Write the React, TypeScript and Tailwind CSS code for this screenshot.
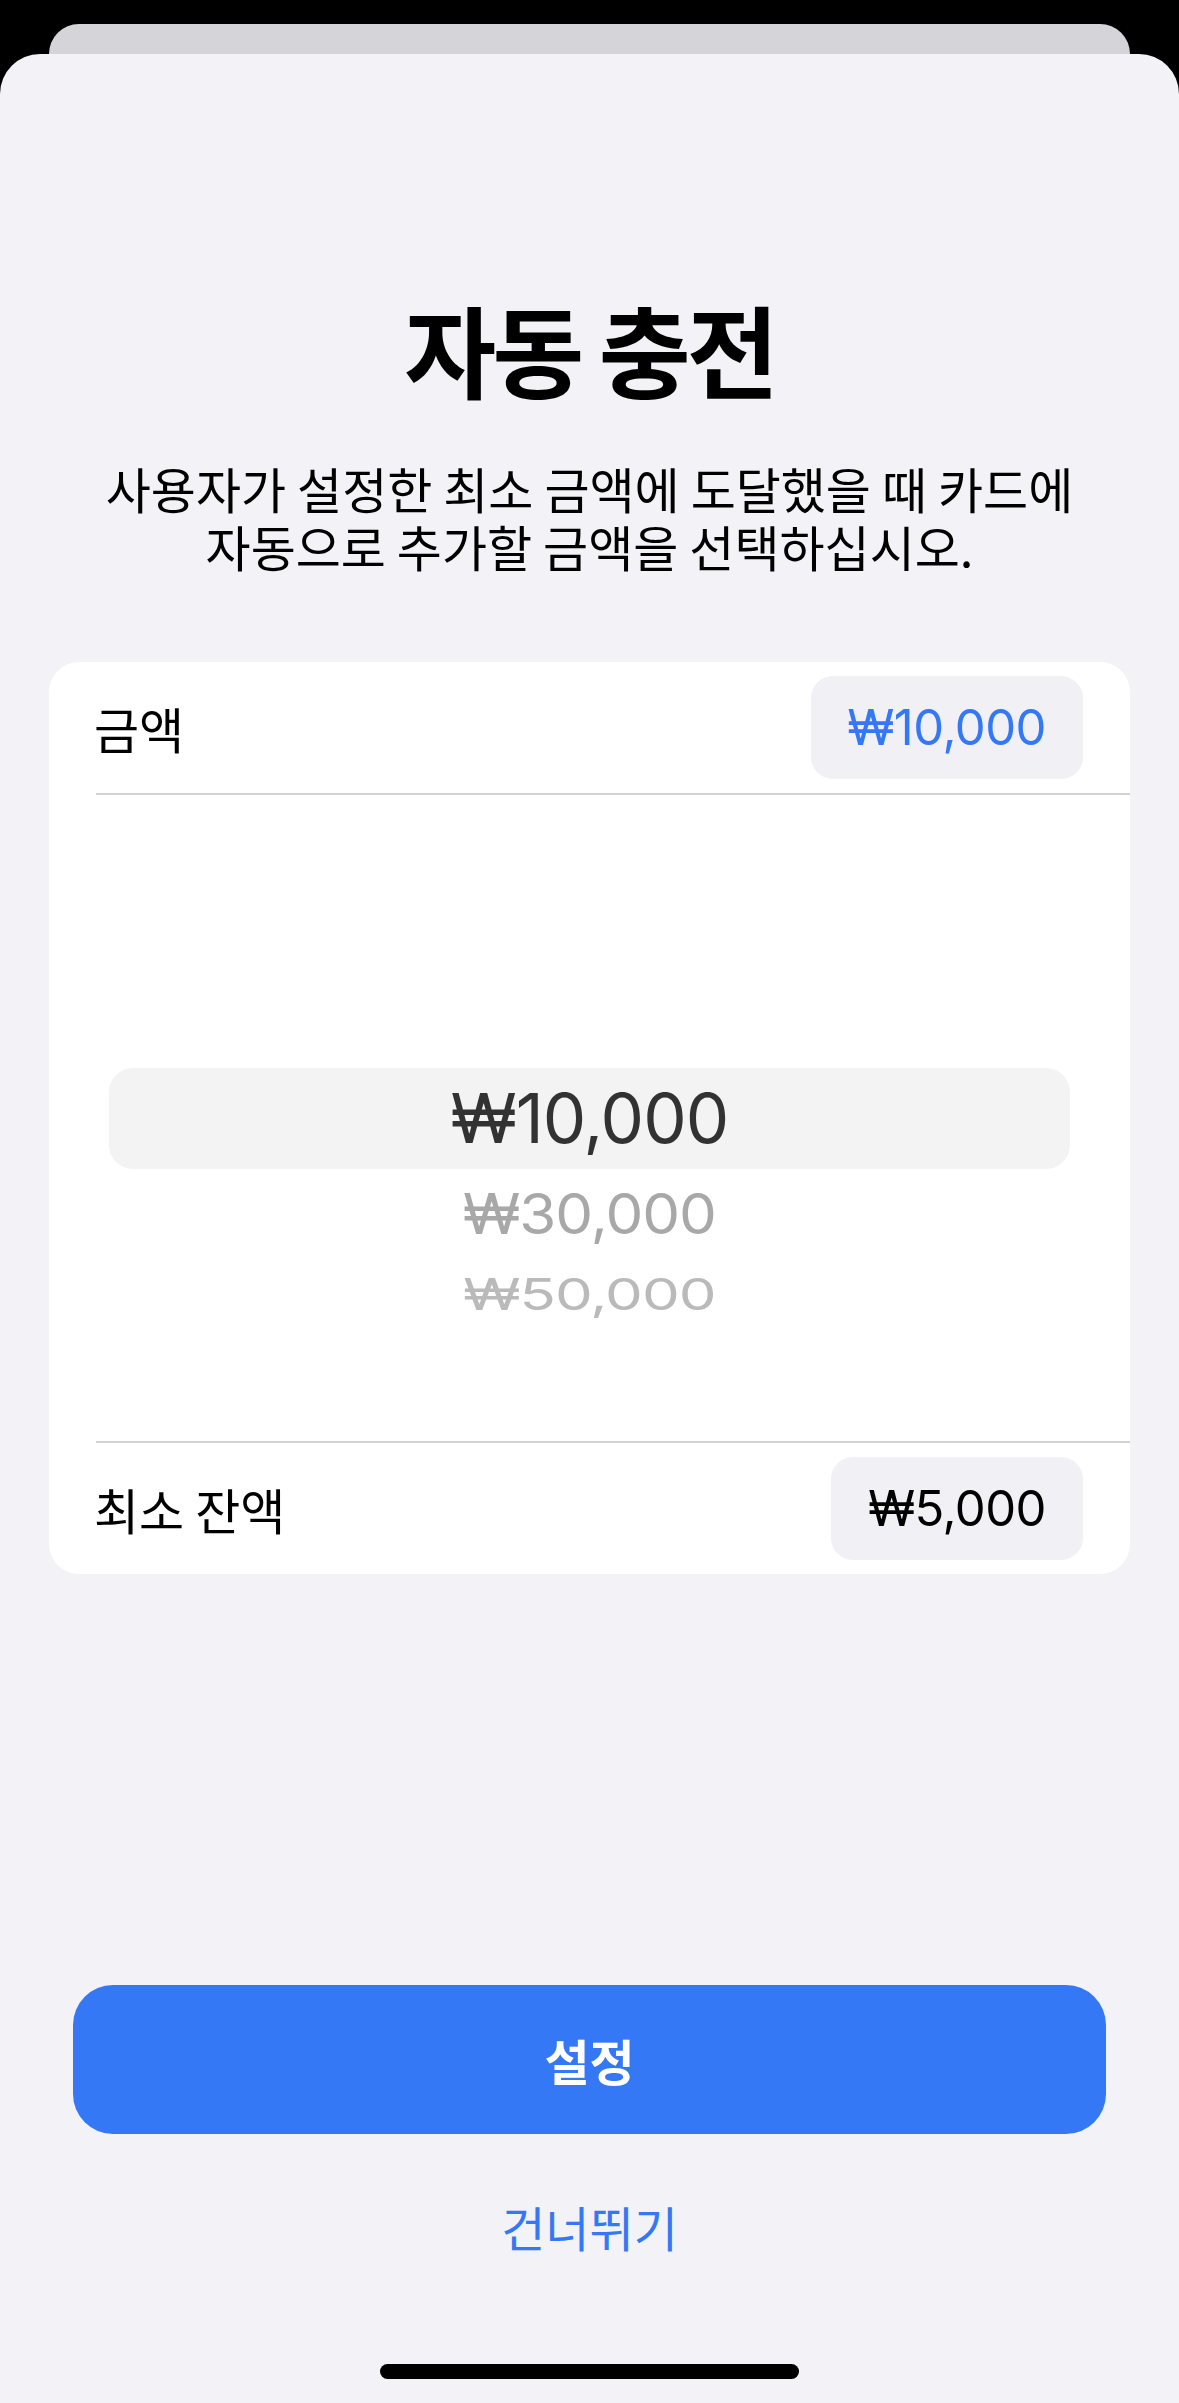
import React from 'react';

const kr = "font-['Noto_Sans_CJK_KR',sans-serif]";
const num = "font-['Inter','Noto_Sans_CJK_KR',sans-serif]";

const ValuePill = ({ value, blue }: { value: string; blue?: boolean }) => (
  <div
    className={`h-[103px] rounded-[22px] bg-[#f0f0f5] px-[37px] flex items-center ${num} text-[49px] tracking-[-0.5px] ${
      blue ? 'text-[#3478f6]' : 'text-black'
    }`}
  >
    {value}
  </div>
);

const Row = ({ label, value, blue }: { label: string; value: string; blue?: boolean }) => (
  <div className="h-[131px] flex items-center justify-between pl-[45px] pr-[47px]">
    <span className={`${kr} text-[49px] text-black leading-none`}>{label}</span>
    <ValuePill value={value} blue={blue} />
  </div>
);

export default function App() {
  return (
    <div className="h-[2403px] bg-black flex flex-col overflow-hidden">
      {/* stacked sheet behind */}
      <div className="mx-[49px] mt-[24px] h-[40px] -mb-[10px] bg-[#d5d4d9] rounded-t-[30px]" />

      <div className="flex-1 bg-[#f2f2f7] rounded-t-[40px] flex flex-col items-center">
        <h1 className={`${kr} mt-[244px] text-[100px] font-bold leading-none tracking-[-0.04em] text-black`}>
          자동 충전
        </h1>
        <p className={`${kr} mt-[61px] text-[49px] leading-[58px] text-black text-center`}>
          <span className="block">사용자가 설정한 최소 금액에 도달했을 때 카드에</span>
          <span className="block">자동으로 추가할 금액을 선택하십시오.</span>
        </p>

        <div className="mt-[87px] w-[1081px] bg-white rounded-[30px] overflow-hidden">
          <Row label="금액" value="₩10,000" blue />
          <div className="ml-[47px] h-[2px] bg-[#d1d1d6]" />

          {/* wheel picker */}
          <div className="h-[646px] pt-[273px] flex flex-col">
            <div className="mx-[60px] h-[101px] rounded-[24px] bg-[#f3f3f4] flex items-center justify-center">
              <span className={`${num} text-[69px] text-[#323232] tracking-[-1px]`}>₩10,000</span>
            </div>
            <div className="h-[88px] flex items-center justify-center">
              <span className={`${num} text-[60px] text-[#a8a8a8] tracking-[-1px] scale-y-[0.94]`}>₩30,000</span>
            </div>
            <div className="h-[74px] flex items-center justify-center">
              <span className={`${num} text-[60px] text-[#bababa] tracking-[-1px] scale-y-[0.74]`}>₩50,000</span>
            </div>
          </div>

          <div className="ml-[47px] h-[2px] bg-[#d1d1d6]" />
          <Row label="최소 잔액" value="₩5,000" />
        </div>

        <button className="mt-[411px] w-[1033px] h-[149px] rounded-[40px] bg-[#3478f6] flex items-center justify-center">
          <span className={`${kr} text-[49px] font-semibold text-white`}>설정</span>
        </button>

        <div className={`${kr} mt-[62px] h-[60px] flex items-center text-[48px] text-[#3478f6]`}>건너뛰기</div>

        <div className="mt-[108px] w-[419px] h-[15px] rounded-full bg-black" />
      </div>
    </div>
  );
}
